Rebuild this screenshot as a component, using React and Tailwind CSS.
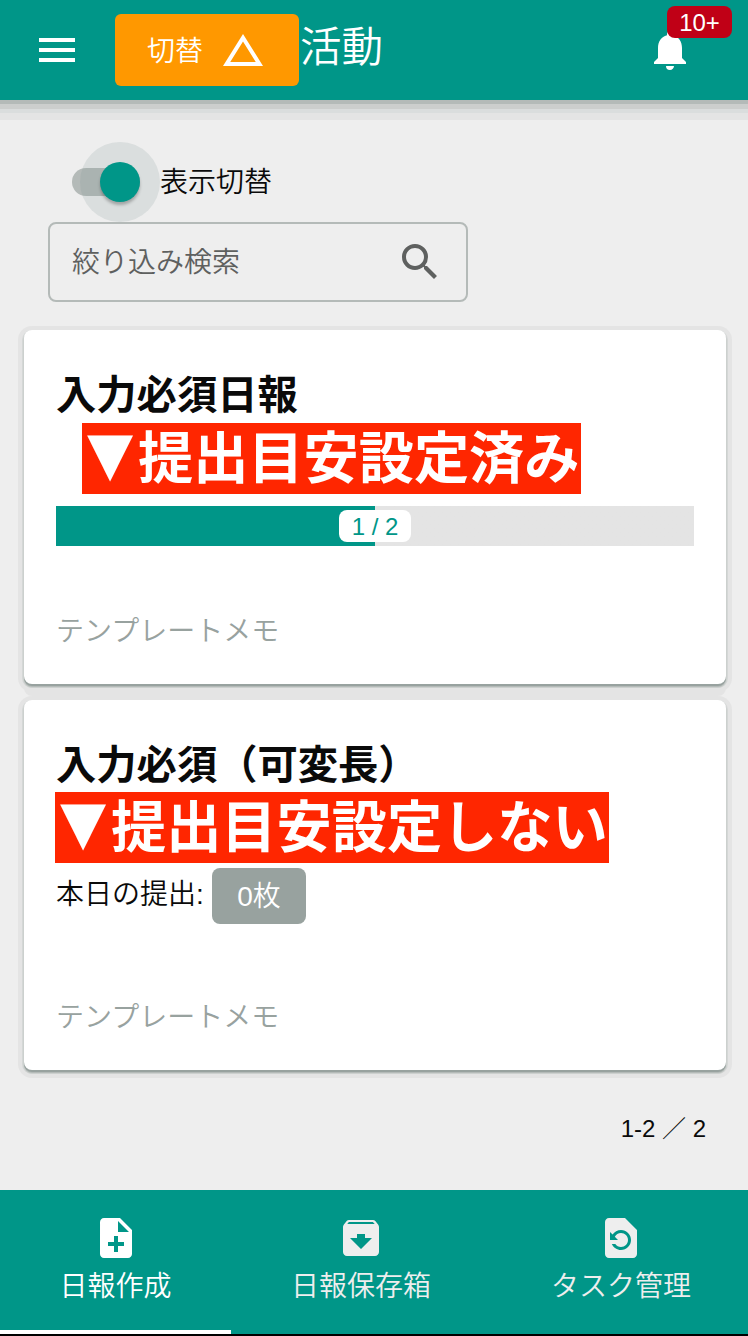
import React from "react";
import {
  MdMenu,
  MdChangeHistory,
  MdNotifications,
  MdSearch,
  MdNoteAdd,
  MdArchive,
  MdRestorePage,
} from "react-icons/md";

function Header() {
  return (
    <header className="relative z-10 flex h-[100px] shrink-0 items-start bg-[#009688] text-white shadow-[0_4px_0_#b4bab8,0_9px_0_#cccecd,0_13px_0_#dadddd,0_20px_0_#e4e4e4]">
      <button className="mt-[26px] ml-[33px] size-12">
        <MdMenu className="size-12" />
      </button>
      <button className="mt-3.5 ml-[34px] flex h-[72px] w-[184px] items-center rounded-md bg-[#ff9800] pl-8">
        <span className="w-[72px] pt-[3px] text-left text-[28px] leading-[69px]">切替</span>
        <MdChangeHistory className="size-12" />
      </button>
      <h1 className="mt-[18px] ml-px text-[41.5px] leading-[60px]">活動</h1>
      <div className="relative mt-[26px] mr-[54px] ml-auto size-12">
        <MdNotifications className="size-12" />
        <span className="absolute -top-5 left-[21px] flex h-8 w-[65px] items-center justify-center rounded-lg bg-[#c00016] pt-0.5 text-2xl leading-8">
          10+
        </span>
      </div>
    </header>
  );
}

function Toggle() {
  return (
    <div className="flex h-20 items-center pl-12">
      <div className="relative h-7 w-[68px] rounded-full bg-[#b4bab8]">
        <span className="absolute -top-[26px] left-2 flex size-20 items-center justify-center rounded-full bg-[#819494]/18">
          <span className="size-10 rounded-full bg-[#009688] shadow-[0_3px_3px_rgba(0,0,0,0.25)]" />
        </span>
      </div>
      <span className="ml-5 pt-0.5 text-[28px] leading-10">表示切替</span>
    </div>
  );
}

function Card({ title, className, children }) {
  return (
    <section className={"relative flex flex-col rounded-lg bg-white px-8 " + className}>
      <h2 className="mt-[34px] pt-[5px] text-[40.3px] leading-[53px] font-bold whitespace-nowrap">
        {title}
      </h2>
      {children}
      <p className="mt-auto mb-8 text-[28px] leading-10 text-[#98a29f]">テンプレートメモ</p>
    </section>
  );
}

function Banner({ className, children }) {
  return (
    <div
      className={
        "flex h-[71px] bg-[#ff2600] text-[55.2px] leading-[73px] font-bold whitespace-nowrap text-white " +
        className
      }
    >
      <span className="flex w-[56px] shrink-0 justify-center font-['DejaVu_Sans',sans-serif] text-[60px] leading-[61px]">
        ▼
      </span>
      <span>{children}</span>
    </div>
  );
}

function Tab({ icon: Icon, label, className }) {
  return (
    <button className={"flex shrink-0 flex-col items-center pt-6 " + className}>
      <Icon className="size-12" />
      <span className="mt-[5px] text-[28px] leading-10">{label}</span>
    </button>
  );
}

export default function App() {
  return (
    <div className="flex h-[1336px] w-[748px] flex-col overflow-hidden bg-[#eeeeee] font-['Liberation_Sans','Noto_Sans_CJK_JP',sans-serif] font-[350] text-[#0a0a0a]">
      <Header />
      <main className="flex flex-1 flex-col px-6 pt-[42px]">
        <Toggle />
        <div className="ml-6 flex h-20 w-[420px] shrink-0 items-center justify-between rounded-lg border-2 border-[#b4bab8] px-[22px] text-[#5e605f]">
          <span className="pt-0.5 text-[28px] leading-10">絞り込み検索</span>
          <MdSearch className="size-12" />
        </div>
        <Card
          title="入力必須日報"
          className="mt-7 h-[354px] w-[702px] shadow-[0_2px_0_#98a29f,0_3px_0_#b4bab8,0_3px_0_1px_#ccd0ce,0_2px_0_2px_#d4d7d6,0_2px_0_6px_#e4e4e4,0_12px_0_#e4e4e4]"
        >
          <Banner className="mt-px ml-[26px] w-[499px]">提出目安設定済み</Banner>
          <div className="mt-3 flex h-10 w-[638px] items-center justify-center bg-linear-to-r from-[#009688] from-50% to-[#e4e4e4] to-50%">
            <span className="h-8 w-[72px] rounded-lg bg-white pt-px text-center text-2xl leading-8 text-[#009688]">
              1 / 2
            </span>
          </div>
        </Card>
        <Card
          title="入力必須（可変長）"
          className="mt-4 h-[370px] w-[702px] shadow-[0_2px_0_#98a29f,0_3px_0_#b4bab8,0_3px_0_1px_#ccd0ce,0_2px_0_2px_#d4d7d6,0_2px_0_6px_#e4e4e4]"
        >
          <Banner className="-ml-px w-[554px]">提出目安設定しない</Banner>
          <div className="mt-[5px] flex h-14">
            <span className="w-[156px] pt-0.5 text-[28px] leading-[50px]">本日の提出:</span>
            <span className="w-[94px] rounded-lg bg-[#98a29f] pt-0.5 text-center text-[28px] leading-[54px] text-white">
              0枚
            </span>
          </div>
        </Card>
        <p className="mt-[43px] mr-[18px] text-right text-2xl leading-8">1-2 ／ 2</p>
      </main>
      <nav className="flex h-[146px] shrink-0 border-b-2 border-black bg-[#009688]">
        <Tab icon={MdNoteAdd} label="日報作成" className="w-[231px] border-b-4 border-white text-white" />
        <Tab icon={MdArchive} label="日報保存箱" className="w-[260px] text-[#eeeeee]" />
        <Tab icon={MdRestorePage} label="タスク管理" className="w-[260px] text-[#eeeeee]" />
      </nav>
    </div>
  );
}
